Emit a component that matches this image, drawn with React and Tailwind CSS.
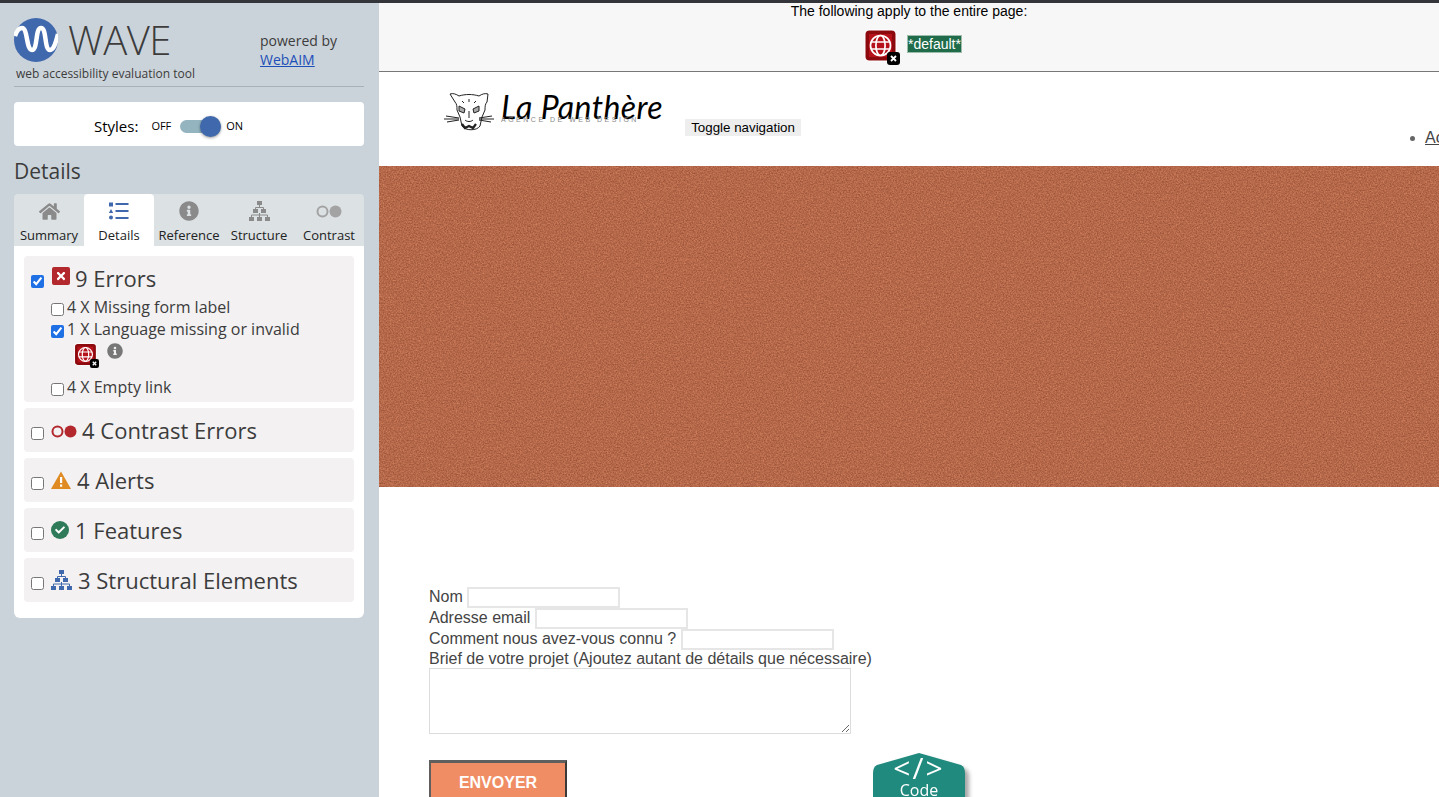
import React from "react";
import { FaHome, FaInfoCircle, FaCheck, FaTimes } from "react-icons/fa";

const sans = "font-['Open_Sans',sans-serif]";
const arial = "font-['Liberation_Sans',Arial,sans-serif]";

// ===== ICONS =====
const WaveLogo = () => (
  <svg viewBox="0 0 44 44" className="w-[44px] h-[44px] shrink-0">
    <circle cx="22" cy="22" r="22" fill="#4068ad" />
    <path
      d="M1 18C3 12 5 10 8 10C14 10 12 32 18 32C24 32 21 10 27 10C33 10 30 32 36 32C40 32 42 24 44 16"
      fill="none"
      stroke="#fff"
      strokeWidth="4.5"
    />
  </svg>
);

const GlobeIcon = ({ className }) => (
  <svg viewBox="0 0 36 36" className={className}>
    <rect x="0.5" y="0.5" width="32" height="32" rx="5" fill="#fff" />
    <rect x="1.5" y="1.5" width="30" height="30" rx="4" fill="#8c0a0e" />
    <rect x="5" y="5" width="23" height="23" fill="#b5121b" />
    <g fill="none" stroke="#fff" strokeWidth="1.7">
      <circle cx="16.5" cy="16.5" r="10" />
      <ellipse cx="16.5" cy="16.5" rx="4.6" ry="10" />
      <path d="M7 13h19M7 20h19" />
    </g>
    <rect x="23" y="23" width="13" height="13" rx="3" fill="#000" />
    <path d="M27 27l5 5M32 27l-5 5" stroke="#fff" strokeWidth="1.8" />
  </svg>
);

const ContrastIcon = ({ color, className }) => (
  <svg viewBox="0 0 26 13" className={className}>
    <circle cx="6.5" cy="6.5" r="5" fill="none" stroke={color} strokeWidth="2" />
    <circle cx="19.5" cy="6.5" r="6" fill={color} />
  </svg>
);

const AlertIcon = () => (
  <svg viewBox="0 0 20 18" className="w-[20px] h-[18px] shrink-0 mr-[1px]">
    <path d="M10 0.5L20 18H0z" fill="#df8a22" />
    <rect x="9" y="6" width="2.2" height="6" fill="#fff" />
    <rect x="9" y="13.5" width="2.2" height="2.2" fill="#fff" />
  </svg>
);

const TreeIcon = ({ className }) => (
  <svg viewBox="0 0 21 20" className={className} fill="currentColor">
    <rect x="8" y="0" width="5" height="4" />
    <rect x="4" y="8" width="5" height="4" />
    <rect x="12" y="8" width="5" height="4" />
    <rect x="0" y="16" width="5" height="4" />
    <rect x="8" y="16" width="5" height="4" />
    <rect x="16" y="16" width="5" height="4" />
    <path d="M10.5 4v2.5M6.5 8V6.5h8V8M2.5 16v-2h16v2M10.5 12v4" fill="none" stroke="currentColor" strokeWidth="1" />
  </svg>
);

const DetailsIcon = () => (
  <svg viewBox="0 0 20 18" className="w-[20px] h-[18px] text-[#4068ad]" fill="currentColor">
    <rect x="0" y="0.5" width="4" height="4" />
    <path d="M2 7l2.2 4H-0.2z" />
    <circle cx="2" cy="15.5" r="2" />
    <rect x="6.5" y="1" width="13" height="2" />
    <rect x="6.5" y="8" width="13" height="2" />
    <rect x="6.5" y="15" width="13" height="2" />
  </svg>
);

const PantherLogo = () => (
  <svg viewBox="0 0 50 42" className="w-[50px] h-[42px] shrink-0">
    <g fill="none" stroke="#222" strokeWidth="1">
      <path d="M6 3c3-1 6 0 9 2 6-2 14-2 20 0 3-2 6-3 9-2l-1 8c-2 2-2 5-2 8l-3 7-2 9c-3 5-15 5-18 0l-2-9-3-7c0-3 0-6-2-8z" />
      <path d="M15 15l6 3-1 4-5-2zM35 15l-6 3 1 4 5-2z" fill="#aaa" />
      <path d="M25 20v7M21 29c2 2 6 2 8 0" />
      <path d="M0 28h15M3 31l12-2M2 25l13 2M50 28H35M47 31l-12-2M48 25l-13 2" />
      <path d="M18 33l3 4 4-2 4 2 3-4" strokeWidth="2.2" />
      <path d="M18 10l2 2M32 10l-2 2M25 8v3" />
    </g>
  </svg>
);

// ===== SIDEBAR =====
const tabs = [
  { label: "Summary", icon: <FaHome className="w-[21px] h-[21px]" /> },
  { label: "Details", icon: <DetailsIcon />, active: true },
  { label: "Reference", icon: <FaInfoCircle className="w-[20px] h-[20px]" /> },
  { label: "Structure", icon: <TreeIcon className="w-[21px] h-[20px]" /> },
  { label: "Contrast", icon: <ContrastIcon color="#a3a3a3" className="w-[26px] h-[13px]" /> },
];

const groups = [
  { label: "4 Contrast Errors", icon: <ContrastIcon color="#b3282d" className="w-[26px] h-[13px] shrink-0 mt-[3px]" /> },
  { label: "4 Alerts", icon: <AlertIcon /> },
  {
    label: "1 Features",
    icon: (
      <span className="w-[18px] h-[18px] rounded-full bg-[#2f7a58] flex items-center justify-center shrink-0 mr-[1px] -mt-[1px]">
        <FaCheck className="w-[10px] h-[10px] text-white" />
      </span>
    ),
  },
  { label: "3 Structural Elements", icon: <TreeIcon className="w-[21px] h-[20px] text-[#4068ad] shrink-0 mr-[1px]" /> },
];

const SubRow = ({ label, checked }) => (
  <div className="flex items-center h-[22px] pl-[20px] text-[16px]">
    <input type="checkbox" defaultChecked={checked} className="w-[13px] h-[13px] mt-1 mr-[3px] accent-[#1f6fe5]" />
    <span>{label}</span>
  </div>
);

const Sidebar = () => (
  <aside className={`${sans} w-[379px] shrink-0 bg-[#cbd3da] pl-[14px] pr-[15px] text-[#3c3c3c]`}>
    {/* ================= BRAND ================= */}
    <div className="h-[83px] border-b border-[#aab0b8] box-content">
      <div className="flex items-start h-[59px] pt-[15px] box-border">
        <WaveLogo />
        <span className="ml-[10px] w-[102px] text-[40px] leading-[44px] font-light tracking-[-0.5px] whitespace-nowrap">WAVE</span>
        <div className="ml-[90px] mt-[13px] text-[14px] leading-[19px]">
          <div>powered by</div>
          <a href="#" className="text-[#1c4fb8] underline">WebAIM</a>
        </div>
      </div>
      <div className="pl-[2px] mt-[4px] text-[12px] leading-[16px]">web accessibility evaluation tool</div>
    </div>

    {/* ================= STYLES TOGGLE ================= */}
    <div className="mt-[15px] h-[44px] bg-white rounded-[4px] flex items-center pl-[80px] pt-[5px] text-black">
      <span className="text-[15px]">Styles:</span>
      <span className="text-[11px] ml-[13px]">OFF</span>
      <span className="relative w-[41px] h-[13px] ml-[9px] rounded-full bg-[#94b5c0]">
        <span className="absolute right-0 -top-[4px] w-[21px] h-[21px] rounded-full bg-[#4068ad] shadow-[0_1px_3px_rgba(0,0,0,0.4)]" />
      </span>
      <span className="text-[11px] ml-[5px]">ON</span>
    </div>

    <h2 className="text-[21px] leading-[26px] mt-[12px] mb-[10px]">Details</h2>

    {/* ================= TABS ================= */}
    <div className="grid grid-cols-5 h-[52px] bg-[#dce1e4] rounded-t-[4px]">
      {tabs.map((tab) => (
        <div
          key={tab.label}
          className={`flex flex-col items-center rounded-t-[4px] text-[13px] text-[#222] ${tab.active ? "bg-white" : ""}`}
        >
          <span className="h-[33px] flex items-center justify-center text-[#8a8a8a] pt-[1px]">{tab.icon}</span>
          <span className="leading-[16px] whitespace-nowrap">{tab.label}</span>
        </div>
      ))}
    </div>

    {/* ================= DETAILS ================= */}
    <div className="bg-white rounded-b-[6px] px-[10px] pt-[10px] pb-[16px] flex flex-col gap-[6px]">
      <div className="bg-[#f3f1f2] rounded-[4px] h-[146px] pl-[7px] pt-[9px]">
        <div className="flex items-center h-[26px]">
          <input type="checkbox" defaultChecked className="w-[13px] h-[13px] mt-[6px] accent-[#1f6fe5]" />
          <span className="w-[18px] h-[18px] ml-[8px] -mt-1 bg-[#b3282d] rounded-[2px] flex items-center justify-center">
            <FaTimes className="w-[12px] h-[12px] text-white" />
          </span>
          <span className="text-[22px] ml-[5px]">9 Errors</span>
        </div>
        <div className="mt-[5px]">
          <SubRow label="4 X Missing form label" />
          <SubRow label="1 X Language missing or invalid" checked />
          <div className="flex h-[36px] pl-[43px] pt-[3px]">
            <GlobeIcon className="w-[25px] h-[25px]" />
            <FaInfoCircle className="w-[16px] h-[16px] ml-[8px] text-[#777]" />
          </div>
          <SubRow label="4 X Empty link" />
        </div>
      </div>
      {groups.map((group) => (
        <div key={group.label} className="bg-[#f3f1f2] rounded-[4px] h-[44px] pl-[7px] flex items-center gap-[5px]">
          <input type="checkbox" className="w-[13px] h-[13px] mt-[6px] mr-[2px] accent-[#1f6fe5]" />
          {group.icon}
          <span className="text-[22px]">{group.label}</span>
        </div>
      ))}
    </div>
  </aside>
);

// ===== PAGE =====
const Field = ({ label, gap }) => (
  <div className="flex items-center h-[21px]">
    <span className="mb-[2px]">{label}</span>
    <input type="text" aria-label={label} className={`${gap} w-[153px] h-[21px] border-2 border-[#e6e6e6] bg-white`} />
  </div>
);

const Page = () => (
  <main className={`${arial} flex-1 min-w-0 flex flex-col bg-white overflow-hidden relative`}>
    {/* ================= NOTICE ================= */}
    <div className="h-[69px] shrink-0 bg-[#f7f7f7] border-b border-[#777] flex flex-col items-center text-[14px] text-black">
      <div className="leading-[17px]">The following apply to the entire page:</div>
      <div className="flex items-start mt-[7px] ml-[8px]">
        <GlobeIcon className="w-[36px] h-[36px] mt-[2px]" />
        <span className="ml-[7px] mt-[8px] bg-[#1f6b4a] border border-[#9dbcab] text-white text-[14px] leading-[16px]">
          *default*
        </span>
      </div>
    </div>

    {/* ================= HEADER ================= */}
    <header className="h-[94px] shrink-0 flex">
      <div className="pl-[65px] pt-[19px] flex items-start shrink-0">
        <PantherLogo />
        <div className="relative ml-[7px] -mt-[3px]">
          <div className="font-['Lato',cursive] italic text-[32px] leading-[38px] tracking-[0.4px] text-black whitespace-nowrap">
            La Panthère
          </div>
          <div className="absolute left-0 top-[28px] text-[7px] leading-[8px] tracking-[2.5px] text-[#888] whitespace-nowrap">
            AGENCE DE WEB DESIGN
          </div>
        </div>
      </div>
      <button className="ml-[22px] mt-[47px] h-[17px] w-[116px] bg-[#eeeeee] text-[13.33px] leading-[17px] text-black shrink-0">
        Toggle navigation
      </button>
      <ul className="ml-[609px] mt-[56px] text-[16px] text-[#444] flex items-center h-[20px] shrink-0">
        <li className="w-[5px] h-[5px] rounded-full bg-[#666] mr-[10px]" />
        <li className="underline">Accueil</li>
      </ul>
    </header>

    {/* ================= BANNER ================= */}
    <div className="h-[321px] shrink-0 bg-[#b5694a]">
      <svg className="block w-full h-full">
        <filter id="grain" x="0" y="0" width="100%" height="100%" colorInterpolationFilters="sRGB">
          <feTurbulence type="fractalNoise" baseFrequency="0.7" numOctaves="3" seed="7" />
          <feColorMatrix
            type="matrix"
            values="0.32 0 0 0 0.55  0.26 0 0 0 0.28  0.2 0 0 0 0.19  0 0 0 0 1"
          />
        </filter>
        <rect width="100%" height="100%" filter="url(#grain)" />
      </svg>
    </div>

    {/* ================= FORM ================= */}
    <form className="pl-[50px] pt-[100px] text-[16px] text-[#444]">
      <Field label="Nom" gap="ml-[4px]" />
      <Field label="Adresse email" gap="ml-[5px]" />
      <Field label="Comment nous avez-vous connu ?" gap="ml-[5px]" />
      <div className="leading-[18px]">Brief de votre projet (Ajoutez autant de détails que nécessaire)</div>
      <textarea
        aria-label="Brief"
        className="block w-[422px] h-[66px] border border-[#dcdcdc] bg-white"
      />
      <button
        type="button"
        className="block mt-[26px] w-[138px] h-[44px] bg-[#f08d64] border-2 border-t-[3px] border-[#5f5f5f] border-r-[#3a3a3a] text-white font-bold text-[16px]"
      >
        ENVOYER
      </button>
    </form>

    {/* ================= FLOATING CODE BADGE ================= */}
    <div className="absolute left-[494px] top-[750px] w-[92px] h-[60px] drop-shadow-[4px_4px_2px_rgba(0,0,0,0.35)]">
      <svg viewBox="0 0 92 60" className="absolute inset-0 w-full h-full">
        <path d="M46 0L88 12q4 2 4 8v40H0V20q0-6 4-8z" fill="#208a7e" />
      </svg>
      <div className={`${sans} relative flex flex-col items-center text-white`}>
        <span className="text-[30px] leading-[28px] tracking-[2px] mt-[1px]">&lt;/&gt;</span>
        <span className="text-[16px] leading-[18px] -mt-[1px]">Code</span>
      </div>
    </div>
  </main>
);

const App = () => (
  <div className="h-screen overflow-hidden flex flex-col bg-white">
    <div className="h-[3px] shrink-0 bg-[#33353b]" />
    <div className="flex-1 min-h-0 flex">
      <Sidebar />
      <Page />
    </div>
  </div>
);

export default App;
